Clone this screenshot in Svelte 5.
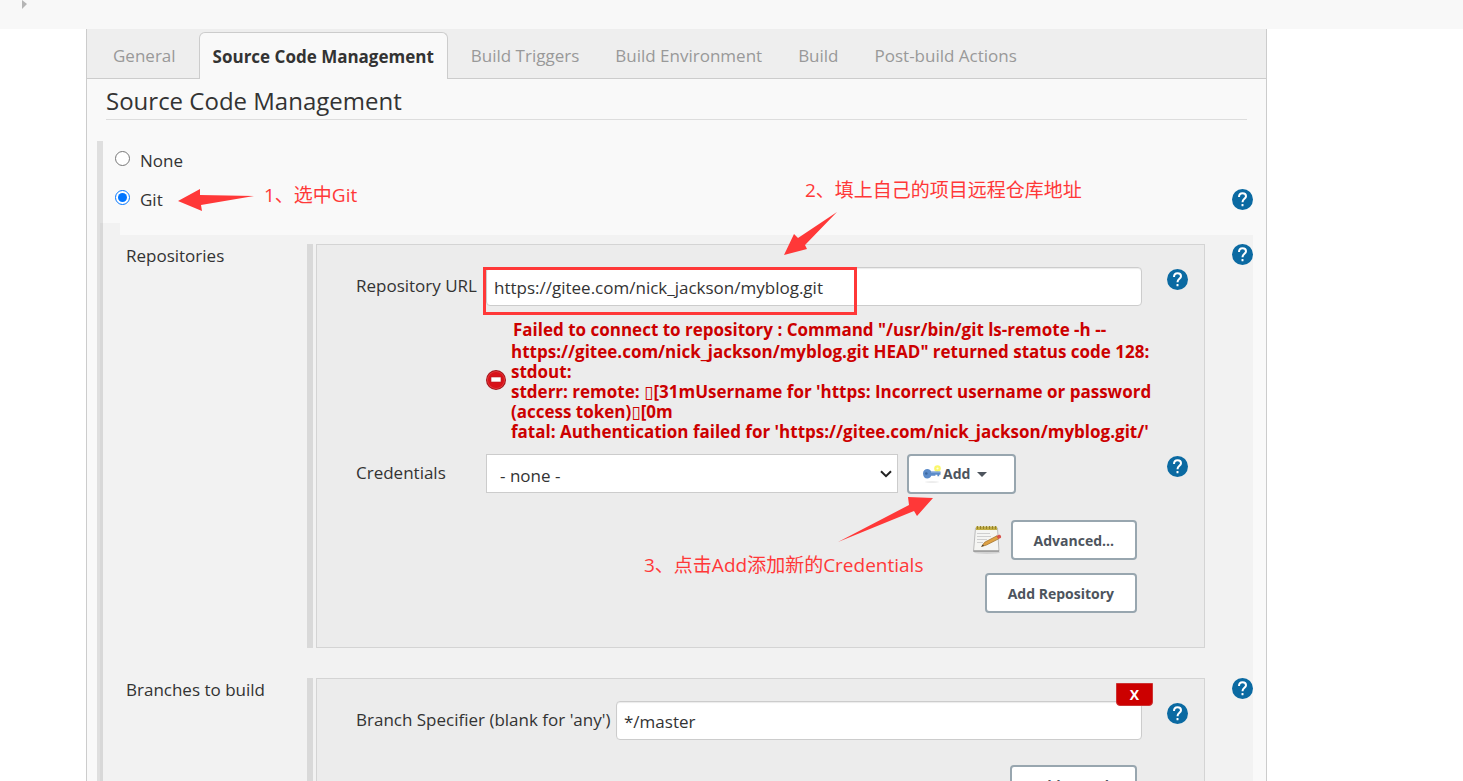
<script>
  const tabs = [
    'General',
    'Source Code Management',
    'Build Triggers',
    'Build Environment',
    'Build',
    'Post-build Actions',
  ];

  let activeTab = $state('Source Code Management');
  let scm = $state('git');
  let repositoryUrl = $state('https://gitee.com/nick_jackson/myblog.git');
  let credentials = $state('none');
  let branchSpecifier = $state('*/master');
</script>

{#snippet help(topic)}
  <button class="help" type="button" aria-label="Help for {topic}">
    <svg viewBox="0 0 21 21" width="21" height="21">
      <circle cx="10.5" cy="10.5" r="10.5" fill="#0b6aa2" />
      <path
        d="M7 8C7 5.400 8.500 4.200 10.500 4.200c2 0 3.500 1.200 3.500 3.100 0 2.500-3.500 2.700-3.500 5.900"
        fill="none"
        stroke="#fff"
        stroke-width="2"
      />
      <rect x="9.500" y="15" width="2" height="2.200" rx="0.5" fill="#fff" />
    </svg>
  </button>
{/snippet}

<div class="page">
  <header class="breadcrumbs">
    <svg viewBox="0 0 5 10" width="5" height="10"><path d="M0 0l5 4-5 5z" fill="#b5b5b5" /></svg>
  </header>

  <main class="config">
    <nav class="tabs">
      {#each tabs as tab}
        <button
          type="button"
          class="tab"
          class:active={tab === activeTab}
          onclick={() => (activeTab = tab)}>{tab}</button
        >
      {/each}
    </nav>

    <h1>Source Code Management</h1>

    <section class="scm">
      <div class="scm-option">
        <label><input type="radio" name="scm" value="none" bind:group={scm} />None</label>
      </div>
      <div class="scm-option">
        <label><input type="radio" name="scm" value="git" bind:group={scm} />Git</label>
        {@render help('Git')}
        <div class="note note-git">
          <svg viewBox="0 0 78 24" width="78" height="24">
            <path d="M0 12L22 0v6l54 1-53 9 1 6z" fill="#ff3838" />
          </svg>
          <span>1、选中Git</span>
        </div>
      </div>

      <div class="scm-body">
        <div class="stub"></div>
        <div class="scm-fields">
          <div class="setting">
            <div class="setting-name">Repositories</div>
            <div class="bar"></div>
            <div class="box">
              <div class="field">
                <label class="field-name" for="repo-url">Repository URL</label>
                <div class="control">
                  <input id="repo-url" type="text" bind:value={repositoryUrl} />
                  <div class="highlight"></div>
                  <div class="note note-url">
                    <span>2、填上自己的项目远程仓库地址</span>
                    <svg viewBox="0 0 54 44" width="54" height="44">
                      <path d="M0 43L10 22l4 4L53 0 21 33l2 4z" fill="#ff3838" />
                    </svg>
                  </div>
                </div>
                {@render help('Repository URL')}
              </div>

              <div class="error">
                <svg viewBox="0 0 20 20" width="20" height="20">
                  <circle cx="10" cy="10" r="10" fill="#a31218" />
                  <circle cx="10" cy="10" r="9" fill="#e33a3e" />
                  <circle cx="10" cy="10" r="8" fill="#d8121a" />
                  <rect x="5" y="7" width="10" height="5" fill="#fff" stroke="#b5191e" stroke-width="0.6" />
                </svg>
                <div class="error-text">
                  <div class="error-lead">Failed to connect to repository : Command "/usr/bin/git ls-remote -h --</div>
                  <div>https://gitee.com/nick_jackson/myblog.git HEAD" returned status code 128:</div>
                  <div>stdout:</div>
                  <div>stderr: remote: <span class="tofu">▯</span>[31mUsername for 'https: Incorrect username or password</div>
                  <div>(access token)<span class="tofu">▯</span>[0m</div>
                  <div>fatal: Authentication failed for 'https://gitee.com/nick_jackson/myblog.git/'</div>
                </div>
              </div>

              <div class="field">
                <label class="field-name" for="credentials">Credentials</label>
                <div class="control credentials">
                  <div class="select">
                    <select id="credentials" bind:value={credentials}>
                      <option value="none">- none -</option>
                    </select>
                    <svg viewBox="0 0 12 8" width="12" height="8">
                      <path d="M1 1.2l5 5 5-5" fill="none" stroke="#222" stroke-width="2" />
                    </svg>
                  </div>
                  <button class="btn add" type="button">
                    <svg viewBox="0 0 20 18" width="20" height="18">
                      <ellipse cx="10" cy="17" rx="7" ry="0.8" fill="#e8e8e8" />
                      <circle cx="15.500" cy="3.500" r="3.300" fill="#fbf76a" />
                      <circle cx="15.500" cy="3.500" r="1.100" fill="#fffde0" />
                      <path
                        d="M1 8.500C1 5.500 3 4 5.400 4c1.900 0 3.100.9 3.800 2.500h9.300v3.200h-1.300v1.500h-1.800V9.700h-2v1H9.200c-.7 1.800-2 2.800-3.900 2.800C2.800 13.500 1 11.500 1 8.500z"
                        fill="#5b8bc9"
                      />
                      <circle cx="4.300" cy="8.500" r="1.300" fill="#3c689f" />
                      <path d="M9 7.300h9" stroke="#8fb2df" stroke-width="0.800" />
                    </svg>
                    Add
                    <svg class="caret" viewBox="0 0 10 5" width="10" height="5"><path d="M0 0h10L5 5z" fill="#4d545d" /></svg>
                  </button>
                  <div class="note note-add">
                    <svg viewBox="0 0 96 46" width="96" height="46">
                      <path d="M95 1L79 19l-3-5L0 45 71 8l-1-8z" fill="#ff3838" />
                    </svg>
                    <span>3、点击Add添加新的Credentials</span>
                  </div>
                </div>
                {@render help('Credentials')}
              </div>

              <div class="actions">
                <svg viewBox="0 0 30 30" width="30" height="30">
                  <ellipse cx="15" cy="27.500" rx="13" ry="1.500" fill="#d2d2d2" />
                  <path d="M3.500 3h22l1.500 23.500H1.500z" fill="#f5f5f3" stroke="#bbb" />
                  <path d="M1.500 26h25.500" stroke="#999" stroke-width="1.500" />
                  <path d="M4 1.500h21v3.500H4z" fill="#c2ae45" />
                  <path d="M5.500 1v3M8.500 1v3M11.500 1v3M14.500 1v3M17.500 1v3M20.500 1v3M23.500 1v3" stroke="#94822c" />
                  <path d="M5 8.500h13M5 11.500h14M5 14.500h10M5 17.500h6" stroke="#cfcfcf" />
                  <path d="M9.500 21.500l3.200-4.300L25 10.800l1.700 3L14.500 20z" fill="#dfa244" stroke="#9c6c25" stroke-width="0.7" />
                  <path d="M9.500 21.500l1.400-2 1 1.500z" fill="#333" />
                  <path d="M24.600 11l2.300-1.200c1.500-.5 3 2 1.800 3.100l-2.400 1.200z" fill="#d9534a" />
                </svg>
                <button class="btn" type="button">Advanced...</button>
              </div>
              <div class="actions">
                <button class="btn" type="button">Add Repository</button>
              </div>
            </div>
            {@render help('Repositories')}
          </div>

          <div class="setting">
            <div class="setting-name">Branches to build</div>
            <div class="bar"></div>
            <div class="box branches">
              <button class="delete" type="button" aria-label="Delete branch">X</button>
              <div class="field">
                <label class="field-name wide" for="branch">Branch Specifier (blank for 'any')</label>
                <div class="control">
                  <input id="branch" type="text" bind:value={branchSpecifier} />
                </div>
                {@render help('Branch Specifier')}
              </div>
              <div class="actions">
                <button class="btn" type="button">Add Branch</button>
              </div>
            </div>
            {@render help('Branches to build')}
          </div>
        </div>
      </div>
    </section>
  </main>
</div>

<style>
  :global(body) {
    margin: 0;
    background: #fff;
  }

  .page {
    height: 100vh;
    overflow: hidden;
    color: #333;
    font-family: 'Open Sans', 'Noto Sans CJK SC', sans-serif;
    font-size: 17px;
    line-height: 24px;
  }

  button,
  input,
  select {
    box-sizing: border-box;
    margin: 0;
    color: inherit;
    font: inherit;
  }

  .breadcrumbs {
    height: 29px;
    padding-left: 22px;
    background: #f8f8f8;
  }

  .breadcrumbs svg {
    display: block;
  }

  .config {
    margin: 0 196px 0 86px;
    border: 1px solid #ccc;
    border-width: 0 1px;
    background: #f9f9f9;
  }

  .tabs {
    display: flex;
    align-items: flex-end;
    gap: 10px;
    height: 49px;
    padding-left: 13px;
    border-bottom: 1px solid #ccc;
    background: #eee;
  }

  .tab {
    height: 46px;
    padding: 2px 13px 0;
    border: 0;
    background: none;
    color: #999;
    white-space: nowrap;
  }

  .tab.active {
    height: 47px;
    margin-bottom: -1px;
    border: 1px solid #ccc;
    border-bottom: 0;
    border-radius: 6px 6px 0 0;
    background: #f9f9f9;
    color: #333;
    font-weight: 700;
  }

  h1 {
    margin: 0 19px;
    padding: 6px 0 2px;
    border-bottom: 1px solid #ddd;
    font-size: 24px;
    font-weight: 500;
    line-height: 32px;
  }

  .scm {
    margin: 21px 13px 0 10px;
    border-left: 6px solid #dfdfdf;
  }

  .scm-option {
    position: relative;
    display: flex;
    align-items: center;
    justify-content: space-between;
    height: 39px;
  }

  .scm-option label {
    display: flex;
    align-items: center;
    gap: 10px;
    padding-left: 12px;
  }

  .scm-option input {
    width: 15px;
    height: 15px;
    margin-bottom: 5px;
  }

  .help {
    flex: none;
    height: 21px;
    padding: 0;
    border: 0;
    background: none;
  }

  .help svg {
    display: block;
  }

  .scm-body {
    display: flex;
    margin: 4px 0 0 -3px;
  }

  .stub {
    width: 20px;
    background: rgba(0, 0, 0, 0.026);
  }

  .scm-fields {
    flex: 1;
    margin-top: 12px;
    padding-top: 9px;
    background: rgba(0, 0, 0, 0.026);
  }

  .setting {
    display: flex;
    margin-bottom: 30px;
  }

  .setting-name {
    width: 181px;
    padding-left: 6px;
  }

  .bar {
    width: 6px;
    margin-right: 3px;
    background: #d9d9d9;
  }

  .box {
    position: relative;
    flex: 1;
    margin-right: 27px;
    padding: 22px 16px 34px 39px;
    border: 1px solid #d4d4d4;
    background: #ececec;
  }

  .field {
    display: flex;
    align-items: flex-start;
  }

  .field-name {
    width: 130px;
    padding-top: 7px;
    white-space: nowrap;
  }

  .field-name.wide {
    width: 260px;
  }

  .field .help {
    margin: 2px 0 0 25px;
  }

  .control {
    position: relative;
    flex: 1;
  }

  .control input {
    display: block;
    width: 100%;
    height: 39px;
    padding: 2px 7px 0;
    border: 1px solid #ccc;
    border-radius: 4px;
    background: #fff;
    box-shadow: inset 0 1px 1px rgba(0, 0, 0, 0.08);
  }

  .highlight {
    position: absolute;
    top: 0;
    left: -3px;
    width: 368px;
    height: 42px;
    border: 3px solid #ff3838;
    pointer-events: none;
  }

  .error {
    display: flex;
    align-items: center;
    gap: 5px;
    margin: 11px 0 12px;
    padding-left: 130px;
    color: #c00;
    font-weight: 700;
    line-height: 20px;
    white-space: nowrap;
  }

  .error-lead {
    padding-left: 2px;
    line-height: 25px;
  }

  .tofu {
    font-family: 'DejaVu Sans', sans-serif;
    font-weight: 400;
  }

  .credentials {
    display: flex;
    gap: 9px;
    padding-right: 126px;
  }

  .select {
    position: relative;
    flex: 1;
  }

  .select select {
    width: 100%;
    height: 39px;
    padding: 4px 13px 0;
    border: 1px solid #ccc;
    border-radius: 0;
    background: #fff;
    appearance: none;
  }

  .select svg {
    position: absolute;
    top: 16px;
    right: 6px;
    pointer-events: none;
  }

  .btn {
    height: 40px;
    padding: 2px 21px 0;
    border: 2px solid #98a6af;
    border-radius: 4px;
    background: #fff;
    color: #4d545d;
    font-size: 14px;
    font-weight: 700;
    white-space: nowrap;
  }

  .add {
    display: flex;
    align-items: center;
    gap: 1px;
    width: 109px;
    padding: 0 13px;
  }

  .add .caret {
    margin-left: 6px;
  }

  .actions {
    display: flex;
    align-items: center;
    justify-content: flex-end;
    gap: 9px;
    margin: 26px 51px 0 0;
  }

  .actions + .actions {
    margin-top: 13px;
  }

  .branches .actions {
    margin-top: 25px;
  }

  .delete {
    position: absolute;
    top: 4px;
    right: 51px;
    z-index: 1;
    width: 37px;
    height: 23px;
    padding: 0;
    border: 1px solid #c33;
    border-radius: 0 0 4px 4px;
    background: #c00;
    color: #fff;
    font-size: 14px;
    font-weight: 700;
    line-height: 20px;
  }

  /* tutorial notes drawn over the form */
  .note {
    position: absolute;
    z-index: 2;
    color: #ff3838;
    font-size: 19px;
    line-height: 24px;
    white-space: nowrap;
    pointer-events: none;
  }

  .note svg,
  .note span {
    display: block;
  }

  .note-git {
    top: 3px;
    left: 75px;
    display: flex;
    gap: 8px;
  }

  .note-git svg {
    margin-top: 6px;
  }

  .note-url {
    top: -89px;
    left: 319px;
  }

  .note-url svg {
    margin: 10px 0 0 -21px;
  }

  .note-add {
    top: 43px;
    left: 158px;
  }

  .note-add svg {
    margin: 0 0 10px 194px;
  }
</style>
